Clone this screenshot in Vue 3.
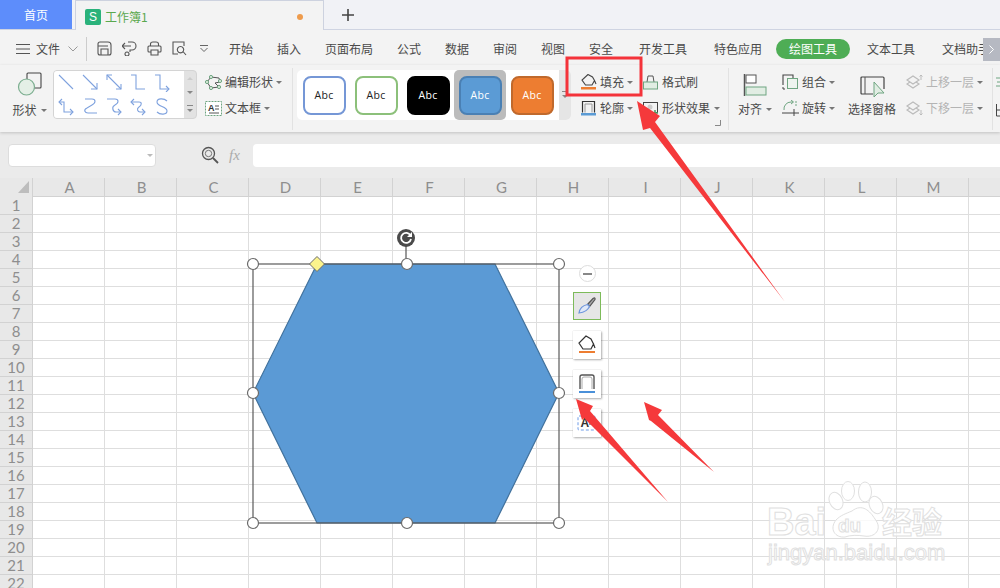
<script setup>
const menus = [
  { t: '开始', w: 24, m: 0 }, { t: '插入', w: 24, m: 24 }, { t: '页面布局', w: 48, m: 24 }, { t: '公式', w: 24, m: 24 },
  { t: '数据', w: 24, m: 24 }, { t: '审阅', w: 24, m: 24 }, { t: '视图', w: 24, m: 24 }, { t: '安全', w: 24, m: 24 },
  { t: '开发工具', w: 48, m: 26 }, { t: '特色应用', w: 48, m: 27 }, { t: '绘图工具', w: 74, m: 14, on: true },
  { t: '文本工具', w: 48, m: 17 }, { t: '文档助手', w: 48, m: 27 }
]
const lines = [
  ['M1 1L15 15'],
  ['M1 1L15 15', 'M15 9V15H9'],
  ['M1 1L15 15', 'M1 6V1H6', 'M15 10V15H10'],
  ['M1 1H6V15H15'],
  ['M1 1H6V15H15', 'M12 12L15 15L12 18'],
  ['M4 1L1 4L4 7', 'M1 4H6V14H15', 'M12 11L15 14L12 17'],
  ['M3 1H10C14 1 14 5 10 7L5 10C1 12 3 15 6 15H15'],
  ['M1 1H9C13 1 13 5 9 7C5 9 7 14 10 14H15', 'M12 11L15 14L12 17'],
  ['M4 1L1 4L4 7', 'M1 4H9C12 4 12 7 9 9C6 11 8 14 10 14H15', 'M12 11L15 14L12 17'],
  ['M13 3C10 0 3 0 3 4C3 9 13 8 13 13C13 17 6 17 3 14']
]
const styles = [
  { c: 's1' }, { c: 's2' }, { c: 's3' }, { c: 's4' }, { c: 's5' }
]
const cols = 'ABCDEFGHIJKLMN'.split('')
const rows = Array.from({ length: 22 }, (_, i) => i + 1)
const cells = Array.from({ length: 14 }, (_, i) => i)
</script>

<template>
  <div class="app">
    <div class="tabs">
      <div class="home">首页</div>
      <div class="book">
        <span class="s-logo">S</span>
        <span class="book-name">工作簿1</span>
        <span class="dot"></span>
      </div>
      <svg class="plus" width="14" height="14" viewBox="0 0 14 14"><path d="M7 1V13M1 7H13" stroke="#444" stroke-width="1.6" /></svg>
    </div>

    <div class="menu">
      <svg class="burger" width="14" height="10" viewBox="0 0 14 10"><path d="M0 .5H14M0 5H14M0 9.5H14" stroke="#555" stroke-width="1" /></svg>
      <span class="file">文件</span>
      <svg class="chev" width="10" height="6" viewBox="0 0 10 6"><path d="M.5 .5L5 5L9.5 .5" fill="none" stroke="#999" /></svg>
      <span class="vsep"></span>
      <svg class="qa" width="15" height="15" viewBox="0 0 15 15"><path d="M1 3Q1 1 3 1H11Q14 1 14 4V12Q14 14 12 14H3Q1 14 1 12ZM4 14V8H11V14M1 5H11" fill="none" stroke="#555" stroke-width="1.1" /></svg>
      <svg class="qa" width="15" height="15" viewBox="0 0 15 15"><path d="M0 5H9M3 2L0 5L3 8M6 1H10A4 4 0 0 1 10 9H8V11M5 11A2 2 0 1 0 5.010 11" fill="none" stroke="#555" stroke-width="1.1" /></svg>
      <svg class="qa" width="15" height="15" viewBox="0 0 15 15"><path d="M3.500 5V3Q3.500 1 6 1H9Q11.500 1 11.500 3V5M4 11H2Q1 11 1 10V6Q1 5 2 5H13Q14 5 14 6V10Q14 11 13 11H11M4 9H11V14H4Z" fill="none" stroke="#555" stroke-width="1.1" /></svg>
      <svg class="qa" width="15" height="15" viewBox="0 0 15 15"><path d="M6 13H1V1H12V5M8.500 5.500A3.200 3.200 0 1 0 8.510 5.500M11 10.500L14 14" fill="none" stroke="#555" stroke-width="1.1" /></svg>
      <svg class="qa-drop" width="8" height="7" viewBox="0 0 8 7"><path d="M0 .5H8M.5 3L4 6.5L7.5 3" fill="none" stroke="#666" /></svg>
      <div class="menu-items">
        <span v-for="m in menus" :key="m.t" class="mi" :class="{ on: m.on }" :style="{ width: m.w + 'px', marginLeft: m.m + 'px' }">{{ m.t }}</span>
      </div>
      <div class="more">
        <svg width="5" height="9" viewBox="0 0 5 9"><path d="M.5 .5L4.500 4.500L.5 8.500" fill="none" stroke="#fff" /></svg>
      </div>
    </div>

    <div class="ribbon">
      <div class="big shape-btn">
        <svg width="26" height="26" viewBox="0 0 26 26">
          <rect x="10" y="1" width="14" height="15" rx="1" fill="none" stroke="#444" stroke-width="1.1" />
          <circle cx="9.500" cy="15" r="8" fill="#e4efe6" stroke="#7cae90" stroke-width="1.2" />
        </svg>
        <span class="lbl">形状<i class="caret"></i></span>
      </div>

      <div class="gallery">
        <div class="gal-lines">
          <svg v-for="(l, i) in lines" :key="i" width="16" height="18" viewBox="0 0 16 18">
            <path v-for="d in l" :key="d" :d="d" fill="none" stroke="#7fa2de" stroke-width="1.1" />
          </svg>
        </div>
        <div class="gal-scroll">
          <i class="up"></i><i class="down"></i><i class="more-d"></i>
        </div>
      </div>

      <div class="stack w-edit">
        <div class="tool">
          <svg width="17" height="15" viewBox="0 0 17 15"><path d="M6 2L14 3L15 7L10 8L14 12L6 13L2 7Z" fill="none" stroke="#555" /><g fill="#dcebdc" stroke="#6fa581"><circle cx="6" cy="2" r="1.6" /><circle cx="15" cy="6" r="1.6" /><circle cx="2" cy="7" r="1.6" /><circle cx="6" cy="13" r="1.6" /><circle cx="14" cy="12" r="1.6" /></g></svg>
          <span>编辑形状</span><i class="caret"></i>
        </div>
        <div class="tool">
          <svg width="17" height="15" viewBox="0 0 17 15"><rect x=".5" y=".5" width="16" height="14" fill="#fff" stroke="#6fa581" stroke-dasharray="2 1" /><text x="3" y="10" class="svg-a">A</text><path d="M10 5H14M10 8H14M4 12H14" stroke="#555" /></svg>
          <span>文本框</span><i class="caret"></i>
        </div>
      </div>

      <span class="rsep"></span>

      <div class="styles">
        <div class="style-list">
          <div v-for="s in styles" :key="s.c" class="style-cell" :class="{ sel: s.c === 's4' }">
            <div class="abc" :class="s.c">Abc</div>
          </div>
        </div>
        <div class="style-scroll"><i class="more-d"></i></div>
      </div>

      <div class="stack w-fill">
        <div class="tool">
          <svg width="17" height="16" viewBox="0 0 17 16"><path d="M8 .5L2 6L5.500 11H12L14.500 6.500L12.500 3L8 .5ZM14.500 6.500L16 10" fill="none" stroke="#444" stroke-width="1.100" /><rect x="1" y="13" width="15" height="2.500" fill="#ed7d31" /></svg>
          <span>填充</span><i class="caret"></i>
        </div>
        <div class="tool">
          <svg width="17" height="16" viewBox="0 0 17 16"><path d="M2.500 12.500V1.500H14.500V12.500" fill="none" stroke="#333" stroke-width="1.200" /><path d="M5 12.500V4H12V12.500" fill="none" stroke="#999" /><rect x="1" y="13" width="15" height="2.500" fill="#5b9bd5" /></svg>
          <span>轮廓</span><i class="caret"></i>
        </div>
      </div>

      <div class="stack w-format">
        <div class="tool">
          <svg width="15" height="15" viewBox="0 0 15 15"><path d="M4 7L5 1H10L11 7" fill="none" stroke="#555" /><rect x=".5" y="7" width="14" height="7" fill="#e1ede3" stroke="#6fa581" /></svg>
          <span>格式刷</span>
        </div>
        <div class="tool">
          <svg width="15" height="15" viewBox="0 0 15 15"><rect x=".5" y="1.500" width="14" height="10" fill="none" stroke="#444" /><circle cx="7" cy="6" r="2.500" fill="#ccc" /><path d="M12 9V15M9 12H15" stroke="#4fa36a" stroke-width="1.600" /></svg>
          <span>形状效果</span><i class="caret"></i>
        </div>
        <svg class="launch" width="6" height="6" viewBox="0 0 6 6"><path d="M0 5.500H5.500V0" fill="none" stroke="#888" /></svg>
      </div>

      <span class="rsep sep2"></span>

      <div class="big align-btn">
        <svg width="24" height="22" viewBox="0 0 24 22"><path d="M1.500 0V22" stroke="#555" stroke-width="1.500" /><rect x="3" y="1" width="10" height="8" fill="#fff" stroke="#555" /><rect x="3" y="13" width="20" height="8" fill="#e1ede3" stroke="#6fa581" /></svg>
        <span class="lbl">对齐<i class="caret"></i></span>
      </div>

      <div class="stack w-group">
        <div class="tool">
          <svg width="17" height="16" viewBox="0 0 17 16"><path d="M1 11V1H11V4" fill="none" stroke="#444" stroke-width="1.100" /><path d="M1 13V15H3" fill="none" stroke="#444" /><rect x="5.500" y="4.500" width="10" height="10" fill="#eef4ef" stroke="#6fa581" /></svg>
          <span>组合</span><i class="caret"></i>
        </div>
        <div class="tool">
          <svg width="17" height="16" viewBox="0 0 17 16"><path d="M2 10A7 7 0 0 1 9 2H11M9 0L11.500 2L9 4" fill="none" stroke="#6fa581" /><path d="M14 1V7" stroke="#6fa581" stroke-dasharray="2 1" /><path d="M0 13H17M12 9V16" stroke="#444" /></svg>
          <span>旋转</span><i class="caret"></i>
        </div>
      </div>

      <div class="big pane-btn">
        <svg width="25" height="22" viewBox="0 0 25 22"><path d="M13 18H2Q1 18 1 17V2Q1 1 2 1H23Q24 1 24 2V13" fill="none" stroke="#444" stroke-width="1.200" /><path d="M5 1V18" stroke="#555" /><path d="M14 6L14 21L18 17H24Z" fill="#e1ede3" stroke="#6fa581" /></svg>
        <span class="lbl">选择窗格</span>
      </div>

      <div class="stack w-layer">
        <div class="tool dim">
          <svg width="17" height="16" viewBox="0 0 17 16"><path d="M1 10L7 14L13 10L7 6Z" fill="#f3f3f3" stroke="#bbb" stroke-width="1.200" /><path d="M1 6L7 2L13 6L7 10Z" fill="#f3f3f3" stroke="#bbb" stroke-width="1.200" /><path d="M15 6V1M13.500 2.500L15 1L16.500 2.500" fill="none" stroke="#bbb" /></svg>
          <span>上移一层</span><i class="caret"></i>
        </div>
        <div class="tool dim">
          <svg width="17" height="16" viewBox="0 0 17 16"><path d="M1 10L7 14L13 10L7 6Z" fill="#f3f3f3" stroke="#bbb" stroke-width="1.200" /><path d="M1 6L7 2L13 6L7 10Z" fill="#f3f3f3" stroke="#bbb" stroke-width="1.200" /><path d="M15 10V15M13.500 13.500L15 15L16.500 13.500" fill="none" stroke="#bbb" /></svg>
          <span>下移一层</span><i class="caret"></i>
        </div>
      </div>

      <span class="rsep sep3"></span>
      <svg class="clip-icon" width="4" height="48" viewBox="0 0 4 48"><path d="M0 8H4M1 12H4M0 16H4" stroke="#6fa581" /><path d="M.5 34V46H4M.5 40H4" fill="none" stroke="#444" /></svg>
    </div>

    <div class="formula">
      <div class="namebox"><i class="caret"></i></div>
      <svg class="zoomi" width="18" height="18" viewBox="0 0 18 18"><circle cx="7.500" cy="7.500" r="6" fill="none" stroke="#555" stroke-width="1.3" /><circle cx="7.500" cy="7.500" r="3.200" fill="none" stroke="#777" /><path d="M12 12L17 17" stroke="#555" stroke-width="1.800" /></svg>
      <span class="fx">fx</span>
      <div class="finput"></div>
    </div>

    <div class="sheet">
      <div class="corner"><i></i></div>
      <div v-for="c in cols" :key="c" class="colh">{{ c }}</div>
      <template v-for="r in rows" :key="r">
        <div class="rowh">{{ r }}</div>
        <div v-for="c in cells" :key="c" class="cell"></div>
      </template>
    </div>

    <div class="float-bar">
      <div class="minus"><i></i></div>
      <div class="fbtn active">
        <svg width="20" height="20" viewBox="0 0 20 20"><path d="M10.500 8.500L16 2.500Q18.500 1 18 3.500L12.500 10.500Z" fill="#aaa" stroke="#555" stroke-width="1.200" /><path d="M10.500 8.500L12.500 10.500Q10 16 2 17Q3 10 10.500 8.500Z" fill="#dfe8f8" stroke="#6f96dc" stroke-width="1.200" /></svg>
      </div>
      <div class="fbtn">
        <svg width="20" height="20" viewBox="0 0 20 20"><path d="M9 1L2 8L6 14H14L16.500 9L14 4L9 1ZM16.500 9L18 13" fill="none" stroke="#333" stroke-width="1.200" /><rect x="2" y="16" width="16" height="2" fill="#ed7d31" /></svg>
      </div>
      <div class="fbtn">
        <svg width="20" height="20" viewBox="0 0 20 20"><path d="M3 15V3Q3 1 5 1H15Q17 1 17 3V15" fill="none" stroke="#555" stroke-width="1.400" /><path d="M5 15V5Q5 3 7 3H13Q15 3 15 5V15" fill="none" stroke="#aaa" /><rect x="2" y="17" width="16" height="2" fill="#4a90d9" /></svg>
      </div>
      <div class="fbtn">
        <svg width="20" height="20" viewBox="0 0 20 20"><rect x="1" y="3" width="17" height="14" rx="1" fill="#fff" stroke="#6f9ce8" stroke-dasharray="3 2" /><text x="3.500" y="14" class="svg-a big-a">A</text><path d="M12 8H17M12 11H17" stroke="#444" /></svg>
      </div>
    </div>

    <svg class="overlay" width="1000" height="588" viewBox="0 0 1000 588">
      <g class="wm">
        <text x="767" y="535" class="wm-bai">Bai</text>
        <ellipse cx="836" cy="501" rx="6.500" ry="9" transform="rotate(-25 836 501)" />
        <ellipse cx="848" cy="491" rx="6.500" ry="9.500" />
        <ellipse cx="865" cy="492" rx="6.500" ry="10" />
        <ellipse cx="876" cy="505" rx="6.500" ry="9" transform="rotate(-25 876 505)" />
        <path d="M852 511C862 503 870 511 875 519C883 529 875 538 864 536C858 535 850 535 845 537C835 538 829 529 836 520C841 515 845 514 852 511Z" />
        <text x="838" y="532" class="wm-du">du</text>
        <text x="882" y="533" class="wm-cn">经验</text>
        <text x="768" y="560" class="wm-url">jingyan.baidu.com</text>
      </g>

      <path d="M406 264V244" stroke="#555" stroke-width="1.200" />
      <polygon points="253,393 317,264 495,264 559,393 495,523 317,523" fill="#5b9ad5" stroke="#41719c" stroke-width="1.200" />
      <rect x="253" y="264" width="306" height="259" fill="none" stroke="#5a5a5a" stroke-width="1.200" />
      <circle cx="406" cy="238" r="9" fill="#4a4a4a" />
      <path d="M410.500 235.500A5 5 0 1 0 411 239" fill="none" stroke="#fff" stroke-width="1.800" />
      <path d="M412 232V237H407Z" fill="#fff" />
      <g fill="#fff" stroke="#6b6b6b" stroke-width="1.200">
        <circle cx="253" cy="264" r="5.500" /><circle cx="407" cy="264" r="5.500" /><circle cx="559" cy="264" r="5.500" />
        <circle cx="253" cy="393" r="5.500" /><circle cx="559" cy="393" r="5.500" />
        <circle cx="253" cy="523" r="5.500" /><circle cx="407" cy="523" r="5.500" /><circle cx="559" cy="523" r="5.500" />
      </g>
      <polygon points="317,256.500 324.500,264 317,271.500 309.500,264" fill="#fbf38c" stroke="#6b6b6b" />

      <rect x="567" y="58" width="74" height="37" fill="none" stroke="#f4333a" stroke-width="3" />
      <g fill="#f5393b">
        <polygon points="637,101 660,116 655,122 785,302 650,128 643,130" />
        <polygon points="576,399 593,406 590,411 668,502 584,418 582,420" />
        <polygon points="644,402 662,410 658,415 714,472 651,421 649,420" />
      </g>
    </svg>
  </div>
</template>

<style>
html, body { margin: 0; overflow: hidden; background: #fff; }
</style>

<style scoped>
.app {
  position: relative;
  width: 1000px;
  height: 588px;
  overflow: hidden;
  background: #fff;
  font-family: "Noto Sans CJK SC", "Noto Sans", sans-serif;
  font-size: 12px;
  color: #4a4a4a;
  display: flex;
  flex-direction: column;
}
i { display: block; font-style: normal; }

/* tabs */
.tabs {
  height: 30px;
  flex: none;
  box-sizing: border-box;
  display: flex;
  align-items: stretch;
  background: #f1f2f6;
  border-bottom: 1px solid #cfd4e2;
}
.home {
  width: 72px;
  background: #5d8dfb;
  color: #fff;
  display: flex;
  align-items: center;
  justify-content: center;
}
.book {
  width: 249px;
  margin-left: 3px;
  margin-bottom: -1px;
  box-sizing: border-box;
  background: #f3f3f3;
  border: 1px solid #cdd2df;
  border-bottom: 0;
  display: flex;
  align-items: center;
  padding: 2px 10px 0 9px;
  color: #5aa84e;
}
.s-logo {
  width: 16px;
  height: 16px;
  background: #2ab27b;
  color: #fff;
  border-radius: 2px;
  font: 12px/16px "Liberation Sans", sans-serif;
  text-align: center;
}
.book-name { margin-left: 4px; }
.dot { width: 6px; height: 6px; border-radius: 50%; background: #ee9b4c; margin-left: auto; margin-right: 10px; }
.plus { align-self: center; margin-left: 17px; }

/* menu */
.menu {
  height: 35px;
  flex: none;
  background: #f3f3f3;
  display: flex;
  align-items: center;
  position: relative;
  padding-top: 2px;
  box-sizing: border-box;
}
.burger { margin-left: 16px; }
.file { margin-left: 6px; }
.chev { margin-left: 8px; }
.vsep { width: 1px; height: 24px; background: #ccc; margin-left: 8px; }
.qa { margin-left: 10px; }
.qa-drop { margin-left: 13px; }
.menu-items { display: flex; align-items: center; margin-left: 21px; white-space: nowrap; }
.mi { text-align: center; flex: none; line-height: 20px; }
.mi.on { background: #4ead55; color: #fff; border-radius: 10px; }
.more {
  position: absolute;
  right: 0;
  top: 8px;
  width: 17px;
  height: 23px;
  background: #b6b9c2;
  display: flex;
  align-items: center;
  justify-content: center;
}

/* ribbon */
.ribbon {
  height: 67px;
  flex: none;
  background: #f3f3f3;
  display: flex;
  align-items: flex-start;
  box-shadow: 0 1px 3px rgba(0, 0, 0, .18);
  position: relative;
  z-index: 1;
  white-space: nowrap;
  overflow: visible;
}
.big { display: flex; flex-direction: column; align-items: center; flex: none; }
.lbl { display: flex; align-items: center; gap: 4px; margin-top: 3px; line-height: 18px; }
.shape-btn { width: 37px; margin-left: 11px; padding-top: 7px; }
.caret {
  width: 0;
  height: 0;
  border: 3px solid transparent;
  border-top: 3px solid #777;
  border-bottom: 0;
  flex: none;
}
.gallery {
  margin: 5px 0 0 5px;
  width: 144px;
  height: 49px;
  box-sizing: border-box;
  display: flex;
  flex: none;
  background: #e2e2e2;
  border: 1px solid #d4d4d4;
  border-radius: 4px;
  overflow: hidden;
}
.gal-lines {
  width: 130px;
  background: #fff;
  display: grid;
  grid-template-columns: repeat(5, 16px);
  column-gap: 8px;
  row-gap: 6px;
  padding: 3px 0 0 4px;
  box-sizing: border-box;
  align-content: start;
}
.gal-scroll { flex: 1; display: flex; flex-direction: column; align-items: center; justify-content: space-around; }
.up { width: 0; height: 0; border: 3px solid transparent; border-bottom: 3px solid #ccc; border-top: 0; }
.down { width: 0; height: 0; border: 3px solid transparent; border-top: 3px solid #888; border-bottom: 0; }
.more-d { width: 6px; height: 7px; border-top: 1px solid #888; position: relative; }
.more-d::after { content: ""; position: absolute; top: 3px; left: 0; border: 3px solid transparent; border-top: 3px solid #888; border-bottom: 0; }
.stack { display: flex; flex-direction: column; gap: 6px; flex: none; padding-top: 7px; position: relative; }
.tool { display: flex; align-items: center; height: 20px; gap: 3px; }
.tool span { line-height: 20px; }
.tool.dim { color: #b4b4b4; }
.w-edit { width: 87px; margin-left: 8px; }
.rsep { width: 1px; height: 62px; background: #e2e2e2; flex: none; margin-top: 3px; }
.styles {
  margin: 5px 0 0 4px;
  width: 274px;
  height: 50px;
  flex: none;
  display: flex;
  background: #fff;
  border-radius: 5px;
  overflow: hidden;
}
.style-list { display: flex; flex: 1; padding-left: 1px; }
.style-cell { width: 52px; height: 50px; flex: none; display: flex; align-items: center; justify-content: center; }
.style-cell.sel { background: #bcbcbc; border-radius: 5px; }
.abc {
  width: 43px;
  height: 39px;
  box-sizing: border-box;
  border-radius: 8px;
  font: 10.5px/35px "Open Sans", sans-serif;
  letter-spacing: .3px;
  text-align: center;
  border: 2px solid;
}
.s1 { border-color: #7597d6; color: #222; background: #fff; }
.s2 { border-color: #8cc07a; color: #222; background: #fff; }
.s3 { border-color: #000; color: #fff; background: #000; }
.s4 { border-color: #4a80b4; color: #fff; background: #5b9bd5; }
.s5 { border-color: #c0692c; color: #fff; background: #ed7d31; }
.style-scroll { width: 12px; background: #e5e5e5; display: flex; align-items: center; justify-content: center; }
.w-fill { width: 63px; margin-left: 9px; }
.w-format { width: 85px; }
.w-format .tool { gap: 4px; }
.launch { position: absolute; right: 7px; bottom: -8px; }
.align-btn { width: 36px; margin-left: 8px; padding-top: 9px; }
.align-btn .lbl { margin-top: 4px; }
.w-group { width: 66px; margin-left: 9px; }
.pane-btn { width: 48px; padding-top: 11px; }
.pane-btn .lbl { margin-top: 2px; }
.w-layer { width: 86px; margin-left: 10px; }
.clip-icon { margin: 5px 0 0 3px; flex: none; }

/* formula */
.formula {
  height: 46px;
  flex: none;
  box-sizing: border-box;
  background: #ebebeb;
  display: flex;
  align-items: center;
}
.namebox {
  width: 148px;
  height: 23px;
  margin-left: 8px;
  background: #fff;
  border: 1px solid #ddd;
  box-sizing: border-box;
  border-radius: 4px;
  display: flex;
  align-items: center;
  justify-content: flex-end;
  padding-right: 2px;
}
.namebox .caret { border-top-color: #bbb; }
.zoomi { margin-left: 45px; }
.fx { font: italic 15px "Liberation Serif", serif; color: #aaa; margin-left: 10px; width: 18px; }
.finput { flex: 1; height: 23px; background: #fff; border-radius: 4px 0 0 4px; margin-left: 6px; }

/* sheet */
.sheet {
  display: grid;
  grid-template-columns: 33px repeat(14, 72px);
  grid-template-rows: 19px repeat(22, 18px);
  flex: none;
  font-family: Lato, "Liberation Sans", sans-serif;
  font-size: 15px;
  color: #8e8e8e;
}
.corner { background: #e8e8e8; position: relative; border-right: 1px solid #d2d2d2; box-sizing: border-box; }
.corner i {
  position: absolute;
  left: 18px;
  top: 3px;
  width: 0;
  height: 0;
  border-left: 11px solid transparent;
  border-bottom: 12px solid #bdbdbd;
}
.colh, .rowh {
  background: #e8e8e8;
  border-right: 1px solid #d2d2d2;
  border-bottom: 1px solid #d2d2d2;
  box-sizing: border-box;
  display: flex;
  align-items: center;
  justify-content: center;
  line-height: 1;
}
.colh { padding-left: 2px; }
.cell { border-right: 1px solid #dedede; border-bottom: 1px solid #dedede; box-sizing: border-box; }

/* floating toolbar */
.float-bar {
  position: absolute;
  left: 573px;
  top: 265px;
  width: 28px;
  display: flex;
  flex-direction: column;
  align-items: center;
  z-index: 3;
}
.minus {
  width: 17px;
  height: 17px;
  border-radius: 50%;
  box-sizing: border-box;
  background: #fff;
  border: 1px solid #ddd;
  display: flex;
  align-items: center;
  justify-content: center;
  margin-bottom: 10px;
}
.minus i { width: 9px; height: 2px; background: #888; }
.fbtn {
  width: 28px;
  height: 28px;
  box-sizing: border-box;
  background: #fff;
  box-shadow: 1px 1px 2px rgba(0, 0, 0, .3), 0 0 1px rgba(0, 0, 0, .2);
  display: flex;
  align-items: center;
  justify-content: center;
  margin-bottom: 11px;
}
.fbtn.active { background: #e6e6e6; border: 1px solid #7dbb5a; box-shadow: none; }

/* canvas overlay */
.overlay { position: absolute; left: 0; top: 0; z-index: 4; pointer-events: none; }
.svg-a { font: bold 9px "Liberation Sans", sans-serif; fill: #333; }
.big-a { font-size: 12px; }
.wm { fill: #fff; fill-opacity: .8; stroke: #e0e0e0; stroke-width: 1; }
.wm-bai { font: bold 38px "Liberation Sans", sans-serif; }
.wm-du { font: bold 19px "Liberation Sans", sans-serif; }
.wm-cn { font: bold 30px "Noto Sans CJK SC", sans-serif; }
.wm-url { font: 22px "Liberation Sans", sans-serif; }
</style>
